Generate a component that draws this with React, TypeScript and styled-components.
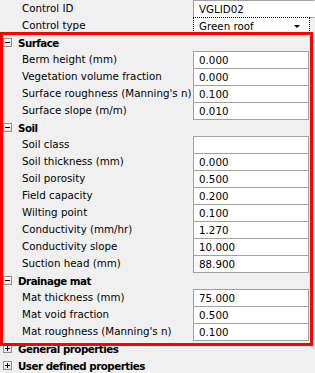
import React from "react";
import styled, { createGlobalStyle } from "styled-components";

const Global = createGlobalStyle`
  html, body {
    margin: 0;
    padding: 0;
    background: #f0f0f0;
  }
  body {
    font-family: "DejaVu Sans", "Liberation Sans", sans-serif;
    font-size: 10px;
    color: #000;
  }
`;

const Grid = styled.div`
  position: relative;
  width: 315px;
  height: 373px;
  overflow: hidden;
  background: #f0f0f0;
`;

const Row = styled.div`
  display: flex;
  height: 17px;
  align-items: flex-start;
`;

const Label = styled.div`
  width: 171px;
  padding-left: 22px;
  height: 17px;
  line-height: 17px;
  font-size: 10.3px;
  white-space: nowrap;
  overflow: hidden;
  flex-shrink: 0;
`;

const Value = styled.div<{ $wide?: boolean; $focus?: boolean }>`
  position: relative;
  box-sizing: border-box;
  width: ${(p) => (p.$wide ? "122px" : "116px")};
  height: 18px;
  line-height: 16px;
  padding-left: 5px;
  background: #fff;
  border: 1px solid #a0a0a0;
  border-right-color: ${(p) => (p.$wide ? "transparent" : "#a0a0a0")};
  ${(p) =>
    p.$focus &&
    `
    border: 1px dotted #000;
    width: 117px;
  `}
  font-size: 10.3px;
  white-space: nowrap;
`;

const Arrow = styled.span`
  position: absolute;
  right: 9px;
  top: 7px;
  width: 0;
  height: 0;
  border-left: 3px solid transparent;
  border-right: 3px solid transparent;
  border-top: 3px solid #000;
`;

const Category = styled.div`
  display: flex;
  align-items: center;
  height: 17px;
  padding-left: 3px;
  gap: 6px;
  font-weight: bold;
  font-size: 10.3px;
  letter-spacing: -0.5px;
  white-space: nowrap;
`;

const Expander = styled.span`
  position: relative;
  box-sizing: border-box;
  width: 9px;
  height: 9px;
  border: 1px solid #8c8c8c;
  background: linear-gradient(#ffffff, #e6e6e6);
  flex-shrink: 0;

  &::before {
    content: "";
    position: absolute;
    left: 1px;
    top: 3px;
    width: 5px;
    height: 1px;
    background: #000;
  }
`;

const PlusExpander = styled(Expander)`
  &::after {
    content: "";
    position: absolute;
    left: 3px;
    top: 1px;
    width: 1px;
    height: 5px;
    background: #000;
  }
`;

const Highlight = styled.div`
  position: absolute;
  left: 0;
  top: 32px;
  width: 313px;
  height: 314px;
  box-sizing: border-box;
  border: 3px solid #ff0000;
  pointer-events: none;
`;

type Prop = { label: string; value: string };

const sections: { title: string; props: Prop[] }[] = [
  {
    title: "Surface",
    props: [
      { label: "Berm height (mm)", value: "0.000" },
      { label: "Vegetation volume fraction", value: "0.000" },
      { label: "Surface roughness (Manning's n)", value: "0.100" },
      { label: "Surface slope (m/m)", value: "0.010" },
    ],
  },
  {
    title: "Soil",
    props: [
      { label: "Soil class", value: "" },
      { label: "Soil thickness (mm)", value: "0.000" },
      { label: "Soil porosity", value: "0.500" },
      { label: "Field capacity", value: "0.200" },
      { label: "Wilting point", value: "0.100" },
      { label: "Conductivity (mm/hr)", value: "1.270" },
      { label: "Conductivity slope", value: "10.000" },
      { label: "Suction head (mm)", value: "88.900" },
    ],
  },
  {
    title: "Drainage mat",
    props: [
      { label: "Mat thickness (mm)", value: "75.000" },
      { label: "Mat void fraction", value: "0.500" },
      { label: "Mat roughness (Manning's n)", value: "0.100" },
    ],
  },
];

export default function App() {
  return (
    <>
      <Global />
      <Grid>
        <Row>
          <Label>Control ID</Label>
          <Value $wide>VGLID02</Value>
        </Row>
        <Row>
          <Label>Control type</Label>
          <Value $focus>
            Green roof
            <Arrow />
          </Value>
        </Row>
        {sections.map((s) => (
          <React.Fragment key={s.title}>
            <Category>
              <Expander />
              {s.title}
            </Category>
            {s.props.map((p) => (
              <Row key={p.label}>
                <Label>{p.label}</Label>
                <Value>{p.value}</Value>
              </Row>
            ))}
          </React.Fragment>
        ))}
        <Category>
          <PlusExpander />
          General properties
        </Category>
        <Category>
          <PlusExpander />
          User defined properties
        </Category>
        <Highlight />
      </Grid>
    </>
  );
}
